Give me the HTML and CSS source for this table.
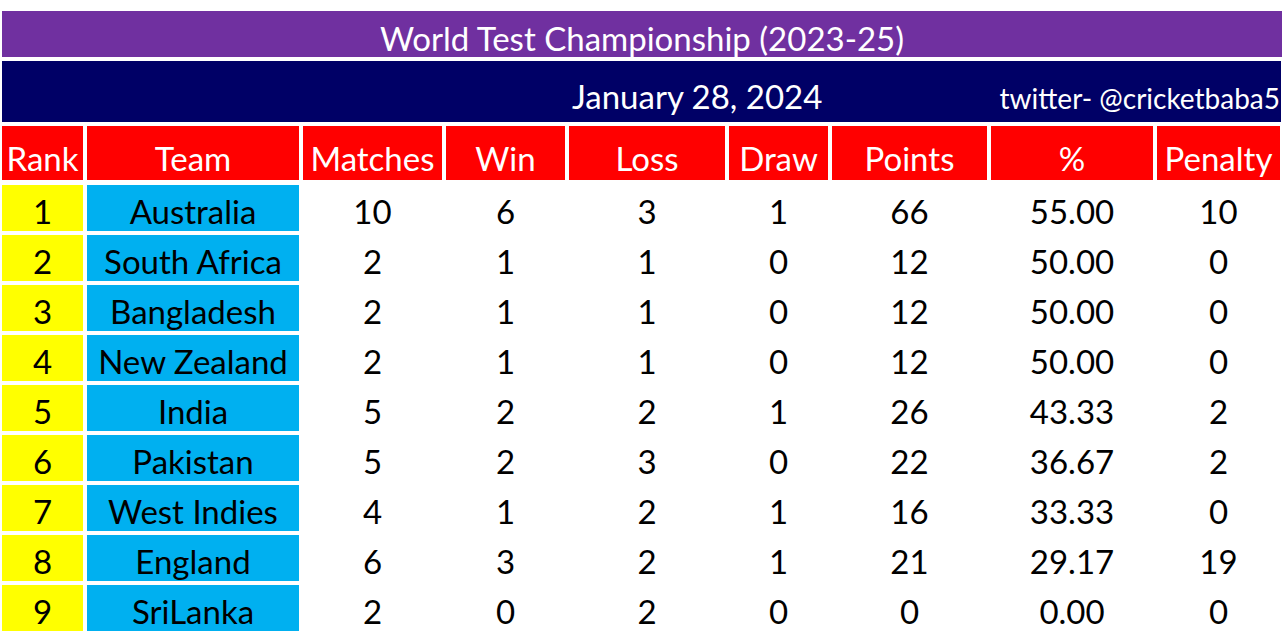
FILE: index.html
```html
<!DOCTYPE html>
<html>
<head>
<meta charset="utf-8">
<link rel="stylesheet" href="styles.css">
</head>
<body>
<div class="sheet">
  <div class="title">World Test Championship (2023-25)</div>
  <div class="subbar">
    <span class="date">January 28, 2024</span>
    <span class="handle">twitter- @cricketbaba5</span>
  </div>
  <div class="table">
    <div class="hd">Rank</div><div class="hd">Team</div><div class="hd">Matches</div><div class="hd">Win</div><div class="hd">Loss</div><div class="hd">Draw</div><div class="hd">Points</div><div class="hd">%</div><div class="hd">Penalty</div>

    <div class="rank">1</div><div class="team">Australia</div><div class="c">10</div><div class="c">6</div><div class="c">3</div><div class="c">1</div><div class="c">66</div><div class="c">55.00</div><div class="c">10</div>
    <div class="rank">2</div><div class="team">South Africa</div><div class="c">2</div><div class="c">1</div><div class="c">1</div><div class="c">0</div><div class="c">12</div><div class="c">50.00</div><div class="c">0</div>
    <div class="rank">3</div><div class="team">Bangladesh</div><div class="c">2</div><div class="c">1</div><div class="c">1</div><div class="c">0</div><div class="c">12</div><div class="c">50.00</div><div class="c">0</div>
    <div class="rank">4</div><div class="team">New Zealand</div><div class="c">2</div><div class="c">1</div><div class="c">1</div><div class="c">0</div><div class="c">12</div><div class="c">50.00</div><div class="c">0</div>
    <div class="rank">5</div><div class="team">India</div><div class="c">5</div><div class="c">2</div><div class="c">2</div><div class="c">1</div><div class="c">26</div><div class="c">43.33</div><div class="c">2</div>
    <div class="rank">6</div><div class="team">Pakistan</div><div class="c">5</div><div class="c">2</div><div class="c">3</div><div class="c">0</div><div class="c">22</div><div class="c">36.67</div><div class="c">2</div>
    <div class="rank">7</div><div class="team">West Indies</div><div class="c">4</div><div class="c">1</div><div class="c">2</div><div class="c">1</div><div class="c">16</div><div class="c">33.33</div><div class="c">0</div>
    <div class="rank">8</div><div class="team">England</div><div class="c">6</div><div class="c">3</div><div class="c">2</div><div class="c">1</div><div class="c">21</div><div class="c">29.17</div><div class="c">19</div>
    <div class="rank">9</div><div class="team">SriLanka</div><div class="c">2</div><div class="c">0</div><div class="c">2</div><div class="c">0</div><div class="c">0</div><div class="c">0.00</div><div class="c">0</div>
  </div>
</div>
</body>
</html>
```

FILE: styles.css
```css
html, body {
  margin: 0;
  padding: 0;
  background: #ffffff;
}
body {
  font-family: Lato, "Open Sans", "Liberation Sans", sans-serif;
  width: 1284px;
  height: 644px;
  overflow: hidden;
}
.sheet {
  padding: 11px 2px 0 2px;
  display: flex;
  flex-direction: column;
}
.title {
  height: 46px;
  background: #7030a0;
  color: #ffffff;
  font-size: 33px;
  display: flex;
  align-items: flex-end;
  justify-content: center;
  padding-bottom: 2px;
  box-sizing: border-box;
  line-height: 1;
  margin-bottom: 4px;
}
.subbar {
  height: 61px;
  width: 1279px;
  background: #000066;
  color: #ffffff;
  display: flex;
  align-items: baseline;
  box-sizing: border-box;
  padding-top: 19px;
  line-height: 1;
  margin-bottom: 4px;
}
.date {
  font-size: 33px;
  margin-left: 570px;
}
.handle {
  font-size: 28px;
  margin-left: auto;
  margin-right: 1px;
}
.table {
  display: grid;
  grid-template-columns: 81px 212px 139px 119px 156px 99px 155px 162px 123px;
  grid-template-rows: 55px repeat(9, 46px);
  column-gap: 4px;
  row-gap: 4px;
}
.table > div {
  display: flex;
  align-items: center;
  justify-content: center;
  font-size: 33px;
  line-height: 1;
  padding-top: 7px;
  box-sizing: border-box;
  color: #000000;
  white-space: nowrap;
}
.table > .hd {
  background: #ff0000;
  color: #ffffff;
  padding-top: 10px;
  margin-bottom: 1px;
}
.table > .rank {
  background: #ffff00;
}
.table > .team {
  background: #00b0f0;
}
```
